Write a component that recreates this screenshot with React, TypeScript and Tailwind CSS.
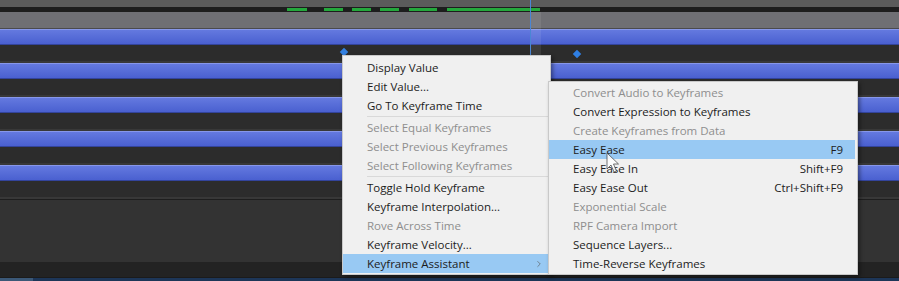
import { ChevronRight } from "lucide-react";

type Item = { label: string; disabled?: boolean; active?: boolean; shortcut?: string; sub?: boolean };

const mainMenu: (Item | "sep")[] = [
  { label: "Display Value" },
  { label: "Edit Value..." },
  { label: "Go To Keyframe Time" },
  "sep",
  { label: "Select Equal Keyframes", disabled: true },
  { label: "Select Previous Keyframes", disabled: true },
  { label: "Select Following Keyframes", disabled: true },
  "sep",
  { label: "Toggle Hold Keyframe" },
  { label: "Keyframe Interpolation..." },
  { label: "Rove Across Time", disabled: true },
  { label: "Keyframe Velocity..." },
  { label: "Keyframe Assistant", active: true, sub: true },
];

const subMenu: Item[] = [
  { label: "Convert Audio to Keyframes", disabled: true },
  { label: "Convert Expression to Keyframes" },
  { label: "Create Keyframes from Data", disabled: true },
  { label: "Easy Ease", shortcut: "F9", active: true },
  { label: "Easy Ease In", shortcut: "Shift+F9" },
  { label: "Easy Ease Out", shortcut: "Ctrl+Shift+F9" },
  { label: "Exponential Scale", disabled: true },
  { label: "RPF Camera Import", disabled: true },
  { label: "Sequence Layers..." },
  { label: "Time-Reverse Keyframes" },
];

// green work-area dashes on the time ruler
const dashes = [
  { left: 287, width: 20 },
  { left: 324, width: 19 },
  { left: 352, width: 19 },
  { left: 380, width: 19 },
  { left: 409, width: 28 },
  { left: 447, width: 93 },
];

function LayerBar() {
  return (
    <>
      <div className="h-[16px] border-t border-b border-t-[#8797ea] border-b-[#33449c] bg-linear-to-b from-[#6479df] to-[#4a60d0]" />
      <div className="h-[18px] border-b-2 border-[#383838] bg-[#2c2c2c]" />
    </>
  );
}

function MenuRow({ item, padRight }: { item: Item; padRight: string }) {
  return (
    <div
      className={`flex h-[19px] items-center justify-between pl-[24px] ${padRight} ${
        item.active ? "bg-[#98c9f3]" : ""
      } ${item.disabled ? "text-[#8e8e8e]" : "text-[#1c1c1c]"}`}
    >
      <span>{item.label}</span>
      {item.shortcut && <span>{item.shortcut}</span>}
      {item.sub && <ChevronRight size={10} strokeWidth={1.5} className="text-[#555]" />}
    </div>
  );
}

export default function App() {
  return (
    <div className="relative h-[281px] w-[899px] overflow-hidden bg-[#2b2b2b] font-['Open_Sans',sans-serif] text-[11.5px]">
      {/* Ruler */}
      <div className="h-[7px] bg-[#5b5b5b]" />
      <div className="relative h-[5px] bg-[#1d1d1d]">
        {dashes.map((d) => (
          <div
            key={d.left}
            className="absolute top-[1px] h-[3px] bg-[#24a83c]"
            style={{ left: d.left, width: d.width }}
          />
        ))}
      </div>
      <div className="h-[17px] border-b border-[#4a4a4e] bg-[#6f6f74]" />

      {/* Layer rows */}
      <LayerBar />
      <LayerBar />
      <LayerBar />
      <LayerBar />
      <LayerBar />

      <div className="h-[63px] border-t border-[#1e1e1e] bg-[#333333]" />
      <div className="h-[15px] bg-[#232323]" />
      <div className="h-[1px] bg-[#1b1b1b]" />
      <div className="flex h-[4px]">
        <div className="w-[33px] bg-[#3b5877]" />
        <div className="flex-1 bg-[#1d3658]" />
      </div>

      {/* Playhead */}
      <div className="absolute top-[12px] left-[531px] h-[50px] w-[10px] bg-white/8" />
      <div className="absolute top-0 left-[530px] h-[60px] w-px bg-[#4a86d4]" />

      {/* Keyframes */}
      <div className="absolute top-[49px] left-[341px] h-[6px] w-[6px] rotate-45 bg-[#3380e0]" />
      <div className="absolute top-[51px] left-[574px] h-[6px] w-[6px] rotate-45 bg-[#2f7fe3]" />

      {/* Context menu */}
      <div className="absolute top-[55px] left-[342px] w-[209px] border border-[#c9c9c9] bg-[#f0f0f0] pt-[2px] pb-[1px] shadow-[2px_2px_4px_rgba(0,0,0,0.4)]">
        {mainMenu.map((item, i) =>
          item === "sep" ? (
            <div key={i} className="ml-[24px] mr-[2px] flex h-[3px] items-center">
              <div className="h-[1px] w-full bg-[#d9d9d9]" />
            </div>
          ) : (
            <div key={i} className="mr-[2px]">
              <MenuRow item={item} padRight="pr-[4px]" />
            </div>
          )
        )}
      </div>

      {/* Keyframe Assistant submenu */}
      <div className="absolute top-[81px] left-[548px] w-[310px] border border-[#c9c9c9] bg-[#f0f0f0] pt-[1px] pb-[1px] shadow-[2px_2px_4px_rgba(0,0,0,0.4)]">
        {subMenu.map((item) => (
          <div key={item.label} className="mr-[2px]">
            <MenuRow item={item} padRight="pr-[12px]" />
          </div>
        ))}
      </div>

      {/* Mouse cursor */}
      <svg className="absolute top-[152px] left-[606px]" width="14" height="22" viewBox="0 0 14 22">
        <path
          d="M1 1 L1 17 L5 13 L8 20 L10.5 19 L7.5 12 L12.5 12 Z"
          fill="#ffffff"
          fillOpacity="0.85"
          stroke="#3a3a3a"
          strokeOpacity="0.7"
          strokeWidth="1"
          strokeLinejoin="round"
        />
      </svg>
    </div>
  );
}
